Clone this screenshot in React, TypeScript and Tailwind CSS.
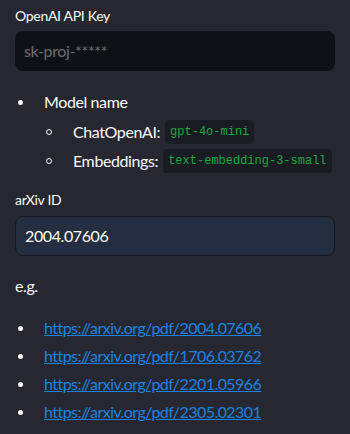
import React from "react";

const links = ["2004.07606", "1706.03762", "2201.05966", "2305.02301"];

const Code = ({ children }: { children: React.ReactNode }) => (
  <code className="ml-[5px] whitespace-nowrap rounded bg-[#1a1c24] px-[5px] py-[3px] font-['Liberation_Mono',monospace] text-[12px] tracking-normal text-[#1fa83f]">
    {children}
  </code>
);

export default function App() {
  return (
    <div className="h-[434px] w-[350px] overflow-hidden bg-[#262730] px-[15px] pt-[4px] font-['Lato','Noto_Sans',sans-serif] tracking-[-0.4px] text-[#fafafa]">
      <label className="block text-[14px] leading-[24px] tracking-[-0.3px]">OpenAI API Key</label>
      <div className="mt-[3px] flex h-[40px] items-center rounded-lg bg-[#0e1117] px-[9px] text-[16px] font-medium text-[#66676c]">
        sk-proj-*****
      </div>

      <ul className="mt-[16px] flex flex-col text-[16px]">
        <li className="flex h-[30px] items-center">
          <span className="ml-[3px] mr-[21px] h-[5px] w-[5px] rounded-full bg-[#fafafa]" />
          Model name
        </li>
        <li className="flex h-[29px] items-center pl-[31px]">
          <span className="mr-[21px] h-[6px] w-[6px] rounded-full border border-[#fafafa]" />
          ChatOpenAI:<Code>gpt-4o-mini</Code>
        </li>
        <li className="flex h-[29px] items-center pl-[31px]">
          <span className="mr-[21px] h-[6px] w-[6px] rounded-full border border-[#fafafa]" />
          Embeddings:<Code>text-embedding-3-small</Code>
        </li>
      </ul>

      <label className="mt-[13px] block text-[14px] leading-[24px] tracking-[-0.3px]">arXiv ID</label>
      <div className="mt-[4px] flex h-[40px] items-center rounded-lg border border-[#141824] bg-[#252d40] px-[9px] text-[16px] text-[#fafafa]">
        2004.07606
      </div>

      <p className="mt-[17px] text-[16px] leading-[26px]">e.g.</p>

      <ul className="mt-[15px] flex flex-col text-[16px]">
        {links.map((id) => (
          <li key={id} className="flex h-[28px] items-center">
            <span className="ml-[3px] mr-[21px] h-[5px] w-[5px] rounded-full bg-[#fafafa]" />
            <a href="#" className="tracking-[-0.55px] text-[#1c83e1] underline">
              https://arxiv.org/pdf/{id}
            </a>
          </li>
        ))}
      </ul>
    </div>
  );
}
